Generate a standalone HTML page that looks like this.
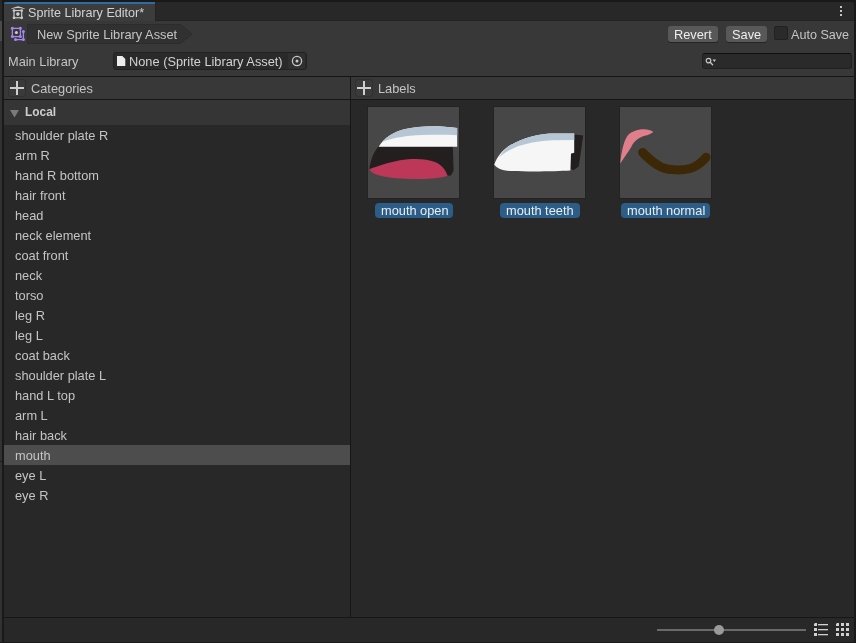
<!DOCTYPE html>
<html><head><meta charset="utf-8">
<style>
html,body{margin:0;padding:0;width:856px;height:643px;overflow:hidden;background:#191919;}
body{position:relative;font-family:"Liberation Sans",sans-serif;font-size:12.8px;color:#c4c4c4;}
.a{position:absolute;}
.t{position:absolute;white-space:nowrap;line-height:1;will-change:transform;}
</style></head><body>
<!-- left neighbour strip -->
<div class="a" style="left:0;top:0;width:2px;height:21px;background:#282828"></div>
<div class="a" style="left:0;top:21px;width:2px;height:621px;background:#323232"></div>
<div class="a" style="left:0;top:21px;width:1.5px;height:20px;background:#4a4a4a"></div>
<div class="a" style="left:0;top:461px;width:2px;height:1px;background:#1e1e1e"></div>
<!-- tab strip -->
<div class="a" style="left:4px;top:2px;width:850px;height:19px;background:#282828;border-top-right-radius:3px"></div>
<div class="a" style="left:155px;top:20px;width:699px;height:1px;background:#222222"></div>
<div class="a" style="left:155px;top:2px;width:1px;height:19px;background:#232323"></div>
<!-- tab -->
<div class="a" style="left:4px;top:2px;width:151px;height:19px;background:#3c3c3c;border-top-left-radius:3px"></div>
<div class="a" style="left:4px;top:2px;width:151px;height:2px;background:#2f6ca3;border-top-left-radius:3px"></div>
<!-- tab icon -->
<svg class="a" style="left:8px;top:3px" width="20" height="18" viewBox="0 0 20 18">
  <path d="M2.9 5.7 Q6.5 3.9 10 3.3 Q13.5 3.9 17.1 5.7 L16.1 6.1 Q13 5.0 10 5.0 Q7 5.0 3.9 6.1 Z" fill="#c8c8c8"/>
  <rect x="6" y="7.5" width="7.7" height="7.3" fill="none" stroke="#c8c8c8" stroke-width="1.2"/>
  <circle cx="6" cy="7.5" r="1.35" fill="#c8c8c8"/><circle cx="13.7" cy="7.5" r="1.35" fill="#c8c8c8"/>
  <circle cx="6" cy="14.8" r="1.35" fill="#c8c8c8"/><circle cx="13.7" cy="14.8" r="1.35" fill="#c8c8c8"/>
  <circle cx="9.9" cy="11.1" r="1.8" fill="#cfcfcf"/>
</svg>
<div class="t" style="left:28px;top:7px;color:#d2d2d2;font-size:12.6px">Sprite Library Editor*</div>
<!-- kebab -->
<div class="a" style="left:840px;top:6px;width:2px;height:2px;background:#c4c4c4"></div>
<div class="a" style="left:840px;top:10px;width:2px;height:2px;background:#c4c4c4"></div>
<div class="a" style="left:840px;top:14px;width:2px;height:2px;background:#c4c4c4"></div>

<!-- main panel -->
<div class="a" style="left:4px;top:21px;width:850px;height:621px;background:#383838"></div>

<!-- breadcrumb -->
<svg class="a" style="left:8px;top:24px" width="20" height="20" viewBox="0 0 20 20">
  <g fill="none" stroke="#a486f2" stroke-width="1.3">
  <rect x="4.35" y="4.35" width="8.05" height="8.25"/>
  <path d="M15.4 7.5 V15.55 H7.5"/>
  </g>
  <g fill="#a486f2">
  <circle cx="4.35" cy="4.35" r="1.5"/><circle cx="12.4" cy="4.35" r="1.5"/>
  <circle cx="4.35" cy="12.6" r="1.5"/><circle cx="12.4" cy="12.6" r="1.5"/>
  <circle cx="15.4" cy="7.5" r="1.5"/><circle cx="15.4" cy="15.55" r="1.5"/><circle cx="7.5" cy="15.55" r="1.5"/>
  </g>
  <circle cx="8.4" cy="8.4" r="1.5" fill="#d0d0d0"/>
</svg>
<svg class="a" style="left:27px;top:24px" width="166" height="20" viewBox="0 0 166 20">
  <path d="M0.5 0.5 H153.5 L165 10 L153.5 19.5 H0.5 Z" fill="#313131" stroke="#2c2c2c" stroke-width="1"/>
</svg>
<div class="t" style="left:37px;top:29px;color:#c4c4c4">New Sprite Library Asset</div>

<!-- buttons -->
<div class="a" style="left:668px;top:26px;width:50px;height:16px;background:#585858;border-radius:3px;box-shadow:0 1px 0 #242424"></div>
<div class="t" style="left:674px;top:29px;color:#eeeeee">Revert</div>
<div class="a" style="left:726px;top:26px;width:41px;height:16px;background:#585858;border-radius:3px;box-shadow:0 1px 0 #242424"></div>
<div class="t" style="left:732px;top:29px;color:#eeeeee">Save</div>
<div class="a" style="left:774px;top:26px;width:12px;height:12px;background:#2a2a2a;border:1px solid #212121;border-radius:2px"></div>
<div class="t" style="left:791px;top:29px;color:#c4c4c4;font-size:12.6px">Auto Save</div>

<!-- main library row -->
<div class="t" style="left:8px;top:56px;color:#c4c4c4">Main Library</div>
<div class="a" style="left:113px;top:52px;width:192px;height:16px;background:#2a2a2a;border:1px solid #212121;border-radius:3px"></div>
<div class="a" style="left:288px;top:53px;width:17px;height:16px;background:#303030"></div>
<svg class="a" style="left:117px;top:56px" width="9" height="11" viewBox="0 0 9 11">
  <path d="M0 0 H5.3 L8.3 3 V10 H0 Z" fill="#ededed"/>
</svg>
<div class="t" style="left:129px;top:56px;color:#d2d2d2">None (Sprite Library Asset)</div>
<svg class="a" style="left:291px;top:55px" width="12" height="12" viewBox="0 0 12 12">
  <circle cx="6" cy="6" r="4.6" fill="none" stroke="#c8c8c8" stroke-width="1.3"/>
  <circle cx="6" cy="6" r="1.5" fill="#c8c8c8"/>
</svg>

<!-- search -->
<div class="a" style="left:702px;top:53px;width:148px;height:14px;background:#2a2a2a;border:1px solid #212121;border-top-color:#0f0f0f;border-radius:3px"></div>
<svg class="a" style="left:705px;top:57px" width="12" height="10" viewBox="0 0 12 10">
  <circle cx="3.5" cy="3.6" r="2.3" fill="none" stroke="#c8c8c8" stroke-width="1.15"/>
  <path d="M5.2 5.3 L7.6 7.7" stroke="#c8c8c8" stroke-width="1.3" stroke-linecap="round"/>
  <path d="M7.6 2.5 H11 L9.3 4.9 Z" fill="#c8c8c8"/>
</svg>

<!-- separators -->
<div class="a" style="left:4px;top:76px;width:850px;height:1px;background:#161616"></div>
<div class="a" style="left:4px;top:99px;width:850px;height:1px;background:#161616"></div>
<div class="a" style="left:350px;top:77px;width:1px;height:540px;background:#161616"></div>

<!-- content bg -->
<div class="a" style="left:4px;top:100px;width:346px;height:517px;background:#282828"></div>
<div class="a" style="left:351px;top:100px;width:503px;height:517px;background:#282828"></div>

<!-- headers -->
<div class="a" style="left:8px;top:79px;width:16px;height:16px;background:#3a3a3a;border:1px solid #303030;border-radius:3px"></div>
<div class="a" style="left:10px;top:87px;width:14px;height:2px;background:#d0d0d0"></div>
<div class="a" style="left:16px;top:81px;width:2px;height:14px;background:#d0d0d0"></div>
<div class="t" style="left:31px;top:83px;color:#c4c4c4">Categories</div>

<div class="a" style="left:355px;top:79px;width:16px;height:16px;background:#3a3a3a;border:1px solid #303030;border-radius:3px"></div>
<div class="a" style="left:357px;top:87px;width:14px;height:2px;background:#d0d0d0"></div>
<div class="a" style="left:363px;top:81px;width:2px;height:14px;background:#d0d0d0"></div>
<div class="t" style="left:378px;top:83px;color:#c4c4c4">Labels</div>

<!-- local header -->
<div class="a" style="left:4px;top:100px;width:346px;height:25px;background:#353535"></div>
<svg class="a" style="left:10px;top:110px" width="10" height="8" viewBox="0 0 10 8"><path d="M0 0 H9 L4.5 7.5 Z" fill="#7a7a7a"/></svg>
<div class="t" style="left:25px;top:107px;color:#cdcdcd;font-weight:bold;font-size:11.9px">Local</div>

<!-- selected row -->
<div class="a" style="left:4px;top:445px;width:346px;height:20px;background:#4d4d4d"></div>

<div class="t" style="left:15px;top:130px">shoulder plate R</div>
<div class="t" style="left:15px;top:150px">arm R</div>
<div class="t" style="left:15px;top:170px">hand R bottom</div>
<div class="t" style="left:15px;top:190px">hair front</div>
<div class="t" style="left:15px;top:210px">head</div>
<div class="t" style="left:15px;top:230px">neck element</div>
<div class="t" style="left:15px;top:250px">coat front</div>
<div class="t" style="left:15px;top:270px">neck</div>
<div class="t" style="left:15px;top:290px">torso</div>
<div class="t" style="left:15px;top:310px">leg R</div>
<div class="t" style="left:15px;top:330px">leg L</div>
<div class="t" style="left:15px;top:350px">coat back</div>
<div class="t" style="left:15px;top:370px">shoulder plate L</div>
<div class="t" style="left:15px;top:390px">hand L top</div>
<div class="t" style="left:15px;top:410px">arm L</div>
<div class="t" style="left:15px;top:430px">hair back</div>
<div class="t" style="left:15px;top:450px">mouth</div>
<div class="t" style="left:15px;top:470px">eye L</div>
<div class="t" style="left:15px;top:490px">eye R</div>

<!-- thumbnails -->
<svg class="a" style="left:368px;top:107px;box-shadow:0 0 0 1px #232323" width="91" height="91" viewBox="0 0 91 91">
  <rect x="0" y="0" width="91" height="91" fill="#474747"/>
  <path d="M10.5 39.5 C6 44 2.5 53 1.3 62.2 L60 64 L78.6 68.8 L83 68.4 L85.6 63.7 L84.8 39.5 Z" fill="#231f1f"/>
  <path d="M10.7 39.8 C16 31 25 25 36 22.3 C52 18.6 70 18.4 89.2 21 L89.2 39.8 Z" fill="#f6f6f6"/>
  <path d="M14 35 C20 29 27 24.5 36 22.3 C52 18.6 70 18.4 89.2 21 L89.2 28.2 C72 27.6 55 27.8 42 28.8 C30 30 21 32.5 14 35 Z" fill="#b7c6d5"/>
  <path d="M1.3 62.2 C9 59.5 20 55.5 32 53.3 C45 51.3 58 51.5 67 55 C73 57.5 77.5 62 79.6 68.9 C70 71.4 55 72.2 42.8 72 C30 71.6 16 70.5 7 67 C4 65.5 2.5 64 1.3 62.2 Z" fill="#bd3759"/>
</svg>
<svg class="a" style="left:494px;top:107px;box-shadow:0 0 0 1px #232323" width="91" height="91" viewBox="0 0 91 91">
  <rect x="0" y="0" width="91" height="91" fill="#474747"/>
  <path d="M80 27.5 L89.2 28.4 L84.8 59.4 L79.4 63.2 L76.2 61.5 L76.4 47.3 L80 45.8 Z" fill="#231f1f"/>
  <path d="M0.2 57.7 C3 50 9 42 17.4 37.6 C28 31.5 42 27.5 56 26.4 L80.2 26.4 L80.2 45.8 L77 46.5 L76.4 63.5 C60 64.5 30 64.8 12.9 63.7 C7 63.2 3 61 0.2 57.7 Z" fill="#f6f6f6"/>
  <path d="M5 50.5 C9 44 13 40 17.4 37.6 C28 31.5 42 27.5 56 26.4 L80.2 26.4 L80.2 33.1 L60 33.3 C45 33.8 30 36.5 20 41 C13 44 9 47 5 50.5 Z" fill="#b7c6d5"/>
</svg>
<svg class="a" style="left:620px;top:107px;box-shadow:0 0 0 1px #232323" width="91" height="91" viewBox="0 0 91 91">
  <rect x="0" y="0" width="91" height="91" fill="#474747"/>
  <path d="M0.2 56.5 C1 48 3 36 7 29.4 C10 25.5 14 23.8 20 22.6 C26 21.8 30 22.8 33.4 24.9 C31 26.5 29 27.5 27.9 27.9 C22 29 19 31 17.4 32.3 C14 35 12 38 11.4 39.8 C8 45 5 50 0.2 56.5 Z" fill="#e07f8b"/>
  <path d="M22.6 45.5 C28 51 34 57 42 60.5 C50 63.5 62 63.5 70 61.5 C77 59.5 82 55 86 50.3" fill="none" stroke="#3c2807" stroke-width="9" stroke-linecap="round"/>
</svg>

<!-- pills -->
<div class="a" style="left:375px;top:203px;width:78px;height:15px;background:#2c5d87;border-radius:4px"></div>
<div class="t" style="left:381px;top:205px;color:#e8eef4">mouth open</div>
<div class="a" style="left:500px;top:203px;width:80px;height:15px;background:#2c5d87;border-radius:4px"></div>
<div class="t" style="left:506px;top:205px;color:#e8eef4">mouth teeth</div>
<div class="a" style="left:621px;top:203px;width:89px;height:15px;background:#2c5d87;border-radius:4px"></div>
<div class="t" style="left:627px;top:205px;color:#e8eef4">mouth normal</div>

<!-- bottom bar -->
<div class="a" style="left:4px;top:617px;width:850px;height:1px;background:#161616"></div>
<div class="a" style="left:4px;top:618px;width:850px;height:24px;background:#282828"></div>
<div class="a" style="left:657px;top:629px;width:149px;height:2px;background:#6a6a6a"></div>
<div class="a" style="left:714px;top:625px;width:10px;height:10px;border-radius:50%;background:#9a9a9a"></div>
<svg class="a" style="left:813px;top:622px" width="16" height="15" viewBox="0 0 16 15">
  <g fill="#d0d0d0">
  <path d="M2 1 H4 V4 H1 V2 Z"/><rect x="1" y="6" width="3" height="3"/><rect x="1" y="11" width="3" height="3"/>
  <rect x="5" y="2" width="10" height="1.3"/><rect x="5" y="7" width="10" height="1.3"/><rect x="5" y="12" width="10" height="1.3"/>
  </g>
</svg>
<svg class="a" style="left:835px;top:622px" width="16" height="15" viewBox="0 0 16 15">
  <g fill="#d0d0d0">
  <path d="M2 1 H4 V4 H1 V2 Z"/><rect x="6" y="1" width="3" height="3"/><rect x="11" y="1" width="3" height="3"/>
  <rect x="1" y="6" width="3" height="3"/><rect x="6" y="6" width="3" height="3"/><rect x="11" y="6" width="3" height="3"/>
  <rect x="1" y="11" width="3" height="3"/><rect x="6" y="11" width="3" height="3"/><rect x="11" y="11" width="3" height="3"/>
  </g>
</svg>
</body></html>
